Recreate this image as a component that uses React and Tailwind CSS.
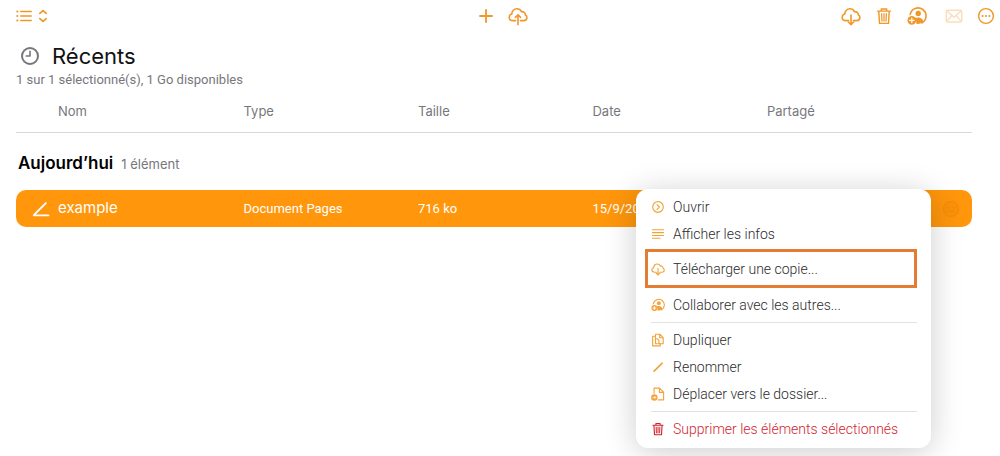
import { useState } from 'react';
import clsx from 'clsx';

function Icon({ className = 'size-5', strokeWidth = 1.6, children }) {
  return (
    <svg
      viewBox="0 0 20 20"
      className={clsx('shrink-0', className)}
      fill="none"
      stroke="currentColor"
      strokeWidth={strokeWidth}
      strokeLinecap="round"
      strokeLinejoin="round"
      aria-hidden="true"
    >
      {children}
    </svg>
  );
}

const cloud = 'M7.6 14.6H5.2C2.9 14.6 1.2 13.2 1.2 11.2C1.2 9.6 2.2 8.4 3.8 8C3.8 5 6 2.8 8.9 2.8C11 2.8 12.6 3.9 13.4 5.6C16 5.4 17.4 7.2 17.3 8.8C18.3 9.4 18.9 10.4 18.9 11.5C18.9 13.3 17.5 14.6 15.6 14.6H12.4';

const icons = {
  list: (
    <>
      <path d="M6 4.4H19M6 10H19M6 15.6H19" strokeWidth="2" />
      <path d="M1.6 4.4H1.7M1.6 10H1.7M1.6 15.6H1.7" strokeWidth="2.6" />
    </>
  ),
  sort: <path d="M5.4 6.2L10 2.2L14.6 6.2M5.4 13.8L10 17.8L14.6 13.8" strokeWidth="2.4" />,
  plus: <path d="M10 4V16M4 10H16" strokeWidth="1.8" />,
  upload: (
    <>
      <path d={cloud} />
      <path d="M10 18.6V9M7.4 11.4L10 8.8L12.6 11.4" />
    </>
  ),
  download: (
    <>
      <path d={cloud} />
      <path d="M10 9V18.4M7.4 16L10 18.6L12.6 16" />
    </>
  ),
  trash: (
    <>
      <path d="M2.8 4.6H17.2M7 4.4V2.2H13V4.4M4.2 4.8L5 18.2H15L15.8 4.8" />
      <path d="M7.4 7.4L7.7 15.6M10 7.4V15.6M12.6 7.4L12.3 15.6" strokeWidth="1.4" />
    </>
  ),
  collaborate: (
    <>
      <path d="M3.2 8.4A8 8 0 1 1 14.8 17" />
      <circle cx="11.2" cy="7.4" r="2.7" fill="currentColor" stroke="none" />
      <path d="M9.2 17.8C9.8 15.6 8.4 14 7.6 12.6C9.6 10.8 13.4 11 15.2 13.2L16.4 15.2C14.6 17.4 12 18.2 9.2 17.8Z" fill="currentColor" stroke="none" />
      <circle cx="4.8" cy="14.4" r="4.3" fill="currentColor" stroke="none" />
      <path d="M4.8 12.2V16.6M2.6 14.4H7" stroke="#fff" strokeWidth="1.3" />
    </>
  ),
  mail: (
    <>
      <rect x="1.4" y="3.6" width="17.2" height="13" rx="1.4" />
      <path d="M2 4.4L10 11.2L18 4.4M2 16L7.6 9.4M18 16L12.4 9.4" />
    </>
  ),
  more: (
    <>
      <circle cx="10" cy="10" r="8.2" />
      <path d="M6.2 10H6.3M10 10H10.1M13.7 10H13.8" strokeWidth="2.2" />
    </>
  ),
  clock: (
    <>
      <circle cx="10" cy="10" r="8" strokeWidth="2" />
      <path d="M10 5.2V10H6.2" strokeWidth="1.6" />
    </>
  ),
  pages: <path d="M2 17H18.4M2.4 16.4L15.4 3.4" strokeWidth="2" />,
  open: (
    <>
      <circle cx="10" cy="10" r="7.6" />
      <path d="M8.6 6.6L12 10L8.6 13.4" />
    </>
  ),
  info: <path d="M2 4H18M2 8H18M2 12H18M2 16H13" strokeWidth="1.5" />,
  duplicate: (
    <>
      <path d="M6 4.6H2.4V18.4H13.2V15.6" />
      <path d="M6.4 1.8H12.6L17.4 6.6V15.4H6.4ZM12.4 2V6.8H17.2" />
      <path d="M6.6 8.2H9L11.4 10.8V15" />
    </>
  ),
  rename: <path d="M4.4 16L16 4.6" strokeWidth="2.4" />,
  move: (
    <>
      <path d="M4.4 9V1.6H12.2L18 7.4V18.4H10.4M12 1.8V7.6H17.8" />
      <circle cx="4.8" cy="15" r="4.6" fill="currentColor" stroke="none" />
      <path d="M2.8 15H6.6M5 13.2L6.8 15L5 16.8" stroke="#fff" strokeWidth="1" />
    </>
  ),
  globe: (
    <>
      <circle cx="10" cy="10" r="8.4" fill="currentColor" fillOpacity="0.4" />
      <path d="M5.4 8.6H8.2M11.8 8.6H14.6M6 13.4C8 11.6 12 11.6 14 13.4" />
    </>
  ),
};

const columns = ['Nom', 'Type', 'Taille', 'Date', 'Partagé'];

const files = [
  { name: 'example', type: 'Document Pages', size: '716 ko', date: '15/9/2023' },
];

const menuGroups = [
  [
    { icon: 'open', label: 'Ouvrir' },
    { icon: 'info', label: 'Afficher les infos' },
  ],
  [{ icon: 'download', label: 'Télécharger une copie...', highlighted: true }],
  [{ icon: 'collaborate', label: 'Collaborer avec les autres...' }],
  [
    { icon: 'duplicate', label: 'Dupliquer' },
    { icon: 'rename', label: 'Renommer' },
    { icon: 'move', label: 'Déplacer vers le dossier...' },
  ],
  [{ icon: 'trash', label: 'Supprimer les éléments sélectionnés', danger: true }],
];

function ToolbarButton({ icon, label, className, ...props }) {
  return (
    <button type="button" aria-label={label} className="text-[#f0982a] disabled:opacity-30" {...props}>
      <Icon className={className}>{icons[icon]}</Icon>
    </button>
  );
}

function Toolbar() {
  return (
    <header className="grid h-8 grid-cols-[1fr_auto_1fr] items-center pl-2 pr-[5px]">
      <div className="flex items-center gap-1 pl-2">
        <ToolbarButton icon="list" label="Affichage" className="size-4" />
        <ToolbarButton icon="sort" label="Trier" className="size-3.5" />
      </div>
      <div className="flex items-center gap-3">
        <ToolbarButton icon="plus" label="Nouveau dossier" />
        <ToolbarButton icon="upload" label="Importer" />
      </div>
      <div className="flex items-center justify-end gap-3.5">
        <div className="mr-1 flex items-center gap-3.5">
          <ToolbarButton icon="download" label="Télécharger" />
          <ToolbarButton icon="trash" label="Supprimer" className="size-[18px]" />
          <ToolbarButton icon="collaborate" label="Collaborer" />
        </div>
        <ToolbarButton icon="mail" label="Envoyer" className="size-[18px]" disabled />
        <ToolbarButton icon="more" label="Plus" className="size-[18px]" />
      </div>
    </header>
  );
}

function FileTable() {
  const cell = 'p-0 text-left font-normal';

  return (
    <table className="w-full table-fixed border-separate border-spacing-0 text-[13px]">
      <colgroup>
        <col className="w-[23.8%]" />
        <col className="w-[18.25%]" />
        <col className="w-[18.25%]" />
        <col className="w-[18.25%]" />
        <col />
      </colgroup>
      <thead>
        <tr className="h-[43px] text-[#77777b]">
          {columns.map(column => (
            <th key={column} className={clsx(cell, 'border-b border-[#d8d8d8] pt-0.5 first:pl-[42px]')}>
              {column}
            </th>
          ))}
        </tr>
      </thead>
      <tbody>
        <tr className="h-[57px]">
          <th colSpan={5} className={clsx(cell, 'pl-0.5 pt-1')}>
            <span className="text-[17px] font-semibold text-black">Aujourd’hui</span>
            <span className="ml-2 text-[13px] text-[#77777b]">1 élément</span>
          </th>
        </tr>
        {files.map(file => (
          <tr key={file.name} className="h-[37px] font-['Roboto',sans-serif] text-white *:bg-[#ff960c]">
            <td className={clsx(cell, 'rounded-l-[10px]')}>
              <div className="flex items-center gap-2 pl-4 font-['Inter',sans-serif] text-[15px]">
                <Icon className="size-[18px]">{icons.pages}</Icon>
                {file.name}
              </div>
            </td>
            <td className={cell}>{file.type}</td>
            <td className={cell}>{file.size}</td>
            <td className={cell}>{file.date}</td>
            <td className={clsx(cell, 'rounded-r-[10px] pr-3')}>
              <button type="button" aria-label="Partage" className="ml-auto block text-[#f78c08]">
                <Icon className="size-[18px]">{icons.globe}</Icon>
              </button>
            </td>
          </tr>
        ))}
      </tbody>
    </table>
  );
}

function MenuItem({ item }) {
  return (
    <button
      type="button"
      role="menuitem"
      className={clsx(
        'flex w-full items-center gap-2 text-left text-sm',
        item.highlighted ? 'h-[39px] border-3 border-[#e57c33] pl-[3px]' : 'h-[27px] pl-1.5',
        item.danger ? 'text-[#d0252f]' : 'text-[#2c2c2e]'
      )}
    >
      <Icon className={clsx('size-3.5', !item.danger && 'text-[#f2a33a]')}>{icons[item.icon]}</Icon>
      {item.label}
    </button>
  );
}

function ContextMenu() {
  return (
    <div
      role="menu"
      className="absolute right-[69px] top-[189px] w-[295px] rounded-xl bg-white pb-1.5 pl-[9px] pr-3.5 pt-1 font-['Roboto',sans-serif] font-light shadow-[0_4px_32px_rgba(0,0,0,0.2)]"
    >
      {menuGroups.map((group, index) => {
        // the outlined entry takes the place of the separators around it
        const separated = index > 2;
        return (
          <div key={group[0].label} className={clsx(index === 1 && 'mb-[3px] mt-0.5')}>
            {separated && <hr className="mb-[3px] ml-1.5 mt-1 border-[#e2e2e2]" />}
            {group.map(item => (
              <MenuItem key={item.label} item={item} />
            ))}
          </div>
        );
      })}
    </div>
  );
}

export default function App() {
  const [menuOpen, setMenuOpen] = useState(true);

  return (
    <div
      className="relative min-h-screen overflow-hidden bg-white font-['Inter',sans-serif]"
      onKeyDown={e => e.key === 'Escape' && setMenuOpen(false)}
    >
      <Toolbar />
      <main className="pl-4 pr-7">
        <div className="flex items-center gap-3 pl-1 pt-2.5">
          <Icon className="size-5 text-[#77777b]">{icons.clock}</Icon>
          <h1 className="text-[22px] leading-7 text-[#111]">Récents</h1>
        </div>
        <p className="font-['Roboto',sans-serif] text-[13px] leading-5 text-[#77777b]">
          1 sur 1 sélectionné(s), 1 Go disponibles
        </p>
        <FileTable />
      </main>
      {menuOpen && <ContextMenu />}
    </div>
  );
}
